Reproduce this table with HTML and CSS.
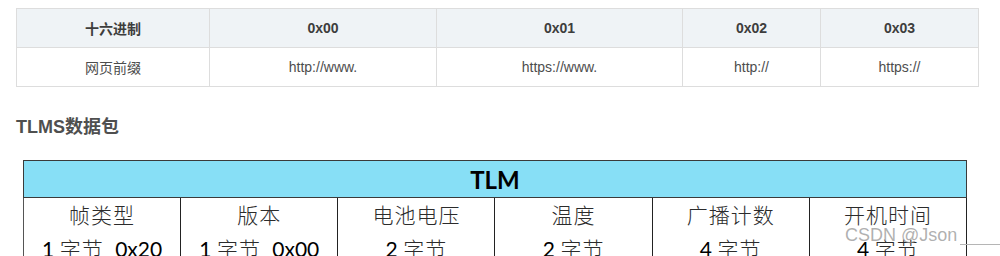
FILE: index.html
```html
<!doctype html>
<html>

<head>
  <meta charset="UTF-8">
  <title>Eddystone 帧格式</title>
  <link rel="stylesheet" href="styles.css">
</head>

<body>
  <div class="article">
    <table class="prefix-table">
      <colgroup>
        <col class="c1">
        <col class="c2">
        <col class="c3">
        <col class="c4">
        <col class="c5">
      </colgroup>
      <thead>
        <tr>
          <th>十六进制</th>
          <th>0x00</th>
          <th>0x01</th>
          <th>0x02</th>
          <th>0x03</th>
        </tr>
      </thead>
      <tbody>
        <tr>
          <td>网页前缀</td>
          <td>http://www.</td>
          <td>https://www.</td>
          <td>http://</td>
          <td>https://</td>
        </tr>
      </tbody>
    </table>

    <h3>TLMS数据包</h3>

    <div class="figure">
      <table class="frame-table">
        <tr>
          <th colspan="6">TLM</th>
        </tr>
        <tr>
          <td><span class="cn">帧类型</span><span class="sz"><span class="num">1</span> 字节&nbsp;&nbsp;<span class="num">0x20</span></span></td>
          <td><span class="cn">版本</span><span class="sz"><span class="num">1</span> 字节&nbsp;&nbsp;<span class="num">0x00</span></span></td>
          <td><span class="cn">电池电压</span><span class="sz"><span class="num">2</span> 字节</span></td>
          <td><span class="cn">温度</span><span class="sz"><span class="num">2</span> 字节</span></td>
          <td><span class="cn">广播计数</span><span class="sz"><span class="num">4</span> 字节</span></td>
          <td><span class="cn">开机时间</span><span class="sz"><span class="num">4</span> 字节</span></td>
        </tr>
      </table>
      <div class="watermark">CSDN @Json<span class="rule"></span></div>
    </div>
  </div>
</body>

</html>
```

FILE: styles.css
```css
body {
  margin: 0;
  font-family: "Liberation Sans", "Noto Sans CJK SC", sans-serif;
  background: #fff;
  overflow: hidden;
}

.article {
  padding: 8px 23px 0 16px;
}

/* prefix table */
.prefix-table {
  border-collapse: collapse;
  width: 962px;
  table-layout: fixed;
  font-size: 14px;
}

.prefix-table .c1 { width: 193px; }
.prefix-table .c2 { width: 227px; }
.prefix-table .c3 { width: 246px; }
.prefix-table .c4 { width: 138px; }
.prefix-table .c5 { width: 158px; }

.prefix-table th,
.prefix-table td {
  border: 1px solid #dddddd;
  height: 39px;
  padding: 0 8px;
  text-align: center;
  box-sizing: border-box;
}

.prefix-table th {
  background: #eff3f6;
  color: #3d3d3d;
  font-weight: bold;
}

.prefix-table td {
  color: #4d4d4d;
}

h3 {
  margin: 28px 0 0;
  font-size: 18px;
  line-height: 24px;
  color: #4f4f4f;
  font-weight: bold;
}

/* frame picture */
.figure {
  position: relative;
  margin: 21px 0 0 7px;
  width: 944px;
}

.frame-table {
  border-collapse: collapse;
  width: 944px;
  table-layout: fixed;
}

.frame-table th {
  background: #87dff6;
  border: 1px solid #3a3a3a;
  height: 37px;
  padding: 0;
  font-family: Lato, "Liberation Sans", sans-serif;
  font-size: 24px;
  font-weight: bold;
  color: #000;
  box-sizing: border-box;
}

.frame-table td {
  border-left: 1px solid #222;
  border-right: 1px solid #222;
  padding: 0;
  text-align: center;
  vertical-align: top;
  color: #2b2b2b;
}

.frame-table td:first-child {
  border-left-color: #555;
}

.cn,
.sz {
  display: block;
  font-family: "Noto Sans CJK SC", sans-serif;
  font-weight: 300;
  font-size: 21px;
  line-height: 32px;
  letter-spacing: 1px;
}

.sz {
  line-height: 36px;
}

.num {
  font-family: Lato, "Liberation Sans", sans-serif;
  font-weight: 400;
  color: #000;
  letter-spacing: 0;
}

.watermark {
  position: absolute;
  left: 822px;
  top: 65px;
  font-family: "Liberation Sans", sans-serif;
  font-size: 18px;
  color: rgba(150, 150, 150, 0.75);
  white-space: nowrap;
  display: flex;
  align-items: center;
}

.watermark .rule {
  display: inline-block;
  width: 44px;
  height: 1px;
  margin: 18px 0 0 3px;
  background: #b5b5b5;
}
```
